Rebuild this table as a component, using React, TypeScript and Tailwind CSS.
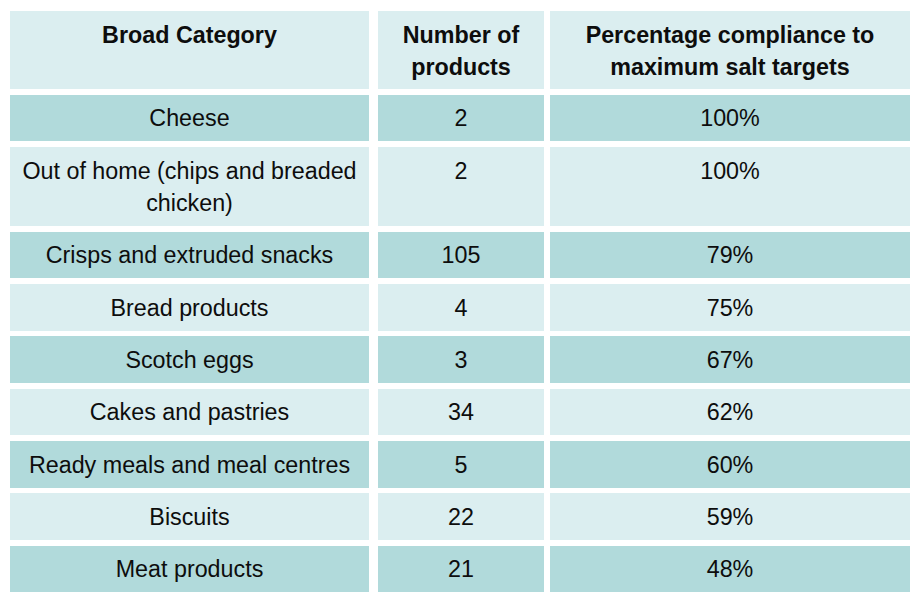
import React from "react";

const rows: { cat: string; n: string; pct: string; tall?: boolean }[] = [
  { cat: "Cheese", n: "2", pct: "100%" },
  { cat: "Out of home (chips and breaded chicken)", n: "2", pct: "100%", tall: true },
  { cat: "Crisps and extruded snacks", n: "105", pct: "79%" },
  { cat: "Bread products", n: "4", pct: "75%" },
  { cat: "Scotch eggs", n: "3", pct: "67%" },
  { cat: "Cakes and pastries", n: "34", pct: "62%" },
  { cat: "Ready meals and meal centres", n: "5", pct: "60%" },
  { cat: "Biscuits", n: "22", pct: "59%" },
  { cat: "Meat products", n: "21", pct: "48%" },
];

export default function App() {
  return (
    <div
      className="w-[921px] h-[603px] bg-white pt-[11px] pl-[10px] text-[#0d0d0d]"
      style={{ fontFamily: '"Liberation Sans", Arial, sans-serif' }}
    >
      <div className="grid grid-cols-[359px_169px_360px] gap-x-[6px] gap-y-[5.8px] text-[23.3px] leading-[32px] text-center">
        <div className="h-[78px] bg-[#dbeef0] pt-[7.5px] px-[6px] font-bold">Broad Category</div>
        <div className="h-[78px] ml-[3px] bg-[#dbeef0] pt-[7.5px] px-[4px] font-bold">Number of products</div>
        <div className="h-[78px] bg-[#dbeef0] pt-[7.5px] px-[6px] font-bold">
          Percentage compliance to maximum salt targets
        </div>
        {rows.map((r, i) => {
          const bg = i % 2 === 0 ? "bg-[#b1dadb]" : "bg-[#dbeef0]";
          const h = r.tall ? "h-[79px]" : "h-[46.5px]";
          return (
            <React.Fragment key={r.cat}>
              <div className={`${bg} ${h} pt-[7.5px] px-[6px]`}>{r.cat}</div>
              <div className={`${bg} ${h} ml-[3px] pt-[7.5px] px-[4px]`}>{r.n}</div>
              <div className={`${bg} ${h} pt-[7.5px] px-[6px]`}>{r.pct}</div>
            </React.Fragment>
          );
        })}
      </div>
    </div>
  );
}
